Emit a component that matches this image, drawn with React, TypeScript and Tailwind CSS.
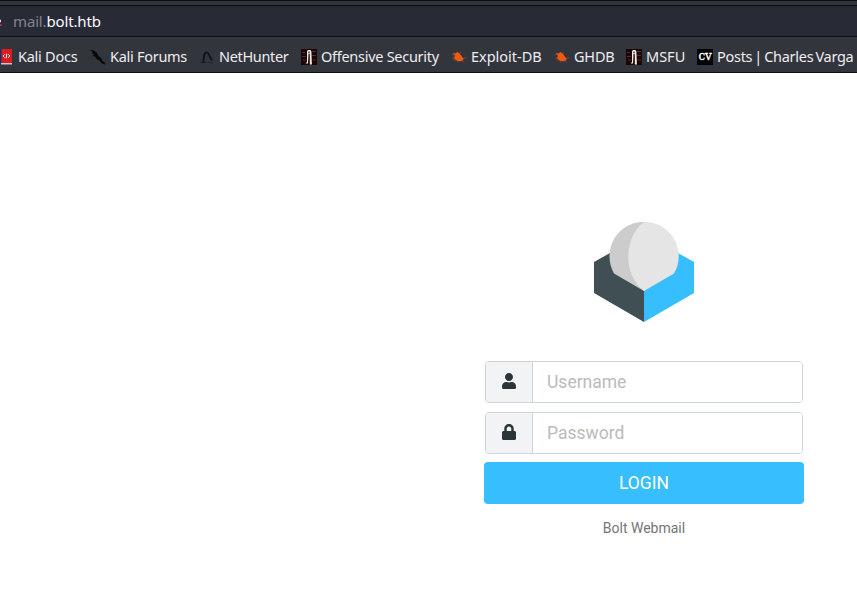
import React from "react";

function DocsIcon() {
  return (
    <svg width="16" height="16" viewBox="0 0 16 16" className="block">
      <path d="M0 0h4v16H0z" fill="#193160" />
      <path d="M3.500 0H14v14H3.500z" fill="#dc1b20" />
      <path d="M3 14h11v1.500H3z" fill="#c8c8cc" />
      <path d="M6.800 5.300L5 7l1.600 1.700M8.700 4.800L8.200 9.300M10.200 5.300l1.600 1.700L10 8.700" fill="none" stroke="#fff" strokeWidth="1" />
    </svg>
  );
}

function ForumsIcon() {
  return (
    <svg width="16" height="16" viewBox="0 0 16 16" className="block">
      <path d="M0 .5l4.500 1.400 2.400 1.900L8.500 7l2.500 1.800 1.300 3L15.500 14l-.9 1.600-3-1.300-2.200-2.700-1.900-1-1.700-2.700-1.900-1 .1-1.700-2-.9L2.400 3z" fill="#08080a" />
      <path d="M2.500 6l2.200 1.300M5.500 9.200L7.600 10" stroke="#111216" />
    </svg>
  );
}

function HunterIcon() {
  return (
    <svg width="16" height="16" viewBox="0 0 16 16" className="block">
      <path d="M4 12.700C5.500 10 4 4 7.300 3.300c3-.3 2.700 4.700 5.800 8.200" fill="none" stroke="#111317" strokeWidth="1.800" />
      <path d="M5.500 4L3.500 5.600l3-.3zM.5 14l5.200-1.900 1.500.8-1.200.9z" fill="#14161a" />
      <path d="M8 13.400l6 .4" stroke="#202329" />
    </svg>
  );
}

function SecurityIcon() {
  return (
    <svg width="16" height="16" viewBox="0 0 16 16" className="block">
      <path fill="#1d0505" d="M0 0h16v16H0z" />
      <path d="M1 3.500h3M11 2.500h4M1 7.500h4M11 6.500h4M2 11h3M12 11h3" stroke="#493130" />
      <path d="M6 2.400L6.800 1h2.600l1 1.400.5 13.100H8.800L8.500 5H7.800L7 14.500H4.600L6 13z" fill="#eeeae5" />
      <path d="M7 3.200h2M8.100 4.500v9.800" stroke="#291414" strokeWidth=".9" />
    </svg>
  );
}

function ExploitIcon() {
  return (
    <svg width="16" height="16" viewBox="0 0 16 16" className="block">
      <path d="M1.800 3.800l3 .6 1.300-1.300 2 .9 1.900 2.200 1.500 2.300 1.500 1.700-1.300.5-.4 1.400-2.600.2-2.800-.6-2-1.300-.8-2L4 6.800z" fill="#f05a13" />
      <path d="M4 9l-3 .4M5 10.500l-2.300 1M7 12l-1.200 1M8.800 5l.8-1.800M12 9.400l3.300-.7M11 11.500l1.600 1.800M4 6.200L.8 5.500" stroke="#a04a22" strokeWidth=".8" />
    </svg>
  );
}

function CvIcon() {
  return (
    <div className="flex h-4 w-4 items-center justify-center bg-black font-['DejaVu_Serif',serif] text-[12px] leading-none tracking-[-0.2px] text-white">
      <span className="-mt-px [-webkit-text-stroke:0.3px_white]">cv</span>
    </div>
  );
}

const bookmarks = [
  { label: "Kali Docs", icon: <DocsIcon />, width: "w-[92px]", tracking: "tracking-[-0.25px]" },
  { label: "Kali Forums", icon: <ForumsIcon />, width: "w-[109px]", tracking: "tracking-[-0.28px]" },
  { label: "NetHunter", icon: <HunterIcon />, width: "w-[102px]", tracking: "tracking-[-0.33px]" },
  { label: "Offensive Security", icon: <SecurityIcon />, width: "w-[150px]", tracking: "tracking-[-0.28px]" },
  { label: "Exploit-DB", icon: <ExploitIcon />, width: "w-[103px]", tracking: "tracking-[-0.02px]" },
  { label: "GHDB", icon: <ExploitIcon />, width: "w-[72px]", tracking: "tracking-[-0.2px]" },
  { label: "MSFU", icon: <SecurityIcon />, width: "w-[71px]", tracking: "tracking-normal" },
  { label: "Posts | Charles Varga", icon: <CvIcon />, width: "w-[160px]", tracking: "tracking-[-0.28px] [word-spacing:-1.4px]" },
];

function BrowserBar() {
  return (
    <header className="h-[73px] overflow-hidden bg-[#33353d] font-['Noto_Sans',sans-serif]">
      <div className="h-1.5 border-y border-[#0d0e12]" />
      <div className="flex h-[31px] items-center border-b border-[#0d0e12] bg-[#282a36]">
        <div className="h-2.5 w-[13px] overflow-hidden">
          <svg width="13" height="10" viewBox="0 0 13 10">
            <path d="M0 3.500Q1.500 5 0 6.500" fill="none" stroke="#ddd" />
            <path d="M0 9.500l1.700-.8" stroke="#ed2454" strokeWidth="1.500" />
          </svg>
        </div>
        <div className="text-[15px] leading-5 tracking-[-0.15px] text-[#fbfbfe]">
          <span className="text-[#82848d]">mail.</span>bolt.htb
        </div>
      </div>
      <nav className="-ml-0.5 flex h-9 w-[859px] items-center border-b border-[#0d0e12] pt-1">
        {bookmarks.map(({ label, icon, width, tracking }) => (
          <div key={label} className={`flex shrink-0 items-center gap-1 ${width}`}>
            <span className="w-4 shrink-0">{icon}</span>
            <span className={`-mt-0.5 text-[14.5px] leading-5 whitespace-nowrap text-[#ededf0] ${tracking}`}>{label}</span>
          </div>
        ))}
      </nav>
    </header>
  );
}

function Logo() {
  return (
    <svg width="100" height="101" viewBox="0 0 100 101" className="mx-auto block">
      <path d="M0 41l16-9 34 38v31L0 72z" fill="#404f54" />
      <path d="M100 41l-16-9-34 38v31l50-29z" fill="#37beff" />
      <path d="M50 .8C31 .8 15.500 16 15.500 35c0 6.500 1.500 12 4.500 17.500L50 70V.8z" fill="#ccc" />
      <path d="M50 .8c19 0 34.700 15.200 34.700 34.200 0 6.500-1.500 12-4.700 17.500L50 70C29 54 29 17 50 .8z" fill="#e5e5e5" />
    </svg>
  );
}

function UserIcon() {
  return (
    <svg width="14" height="16" viewBox="0 0 448 512">
      <path d="M224 256c70.700 0 128-57.300 128-128S294.700 0 224 0 96 57.300 96 128s57.300 128 128 128zm89.600 32h-16.700c-22.200 10.200-46.900 16-72.900 16s-50.600-5.800-72.900-16h-16.700C60.200 288 0 348.200 0 422.400V464c0 26.500 21.500 48 48 48h352c26.500 0 48-21.500 48-48v-41.600c0-74.200-60.200-134.400-134.400-134.400z" fill="#2c363a" />
    </svg>
  );
}

function LockIcon() {
  return (
    <svg width="14" height="16" viewBox="0 0 448 512">
      <path d="M400 224h-24v-72C376 68.200 307.800 0 224 0S72 68.200 72 152v72H48c-26.500 0-48 21.500-48 48v192c0 26.500 21.500 48 48 48h352c26.500 0 48-21.500 48-48V272c0-26.500-21.500-48-48-48zm-104 0H152v-72c0-39.700 32.300-72 72-72s72 32.300 72 72v72z" fill="#2c363a" />
    </svg>
  );
}

function Field({ icon, placeholder, type }: { icon: React.ReactNode; placeholder: string; type: string }) {
  return (
    <label className="mx-px flex h-[42px] overflow-hidden rounded-[4px] border border-[#ced4da]">
      <span className="flex w-[47px] shrink-0 items-center justify-center border-r border-[#ced4da] bg-[#f1f3f5] pb-[2px]">{icon}</span>
      <input
        type={type}
        placeholder={placeholder}
        className="min-w-0 flex-1 bg-white px-3.5 text-[17.5px] outline-none placeholder:text-[#bbb]"
      />
    </label>
  );
}

export default function App() {
  return (
    <div className="h-[589px] w-[857px] overflow-hidden bg-white">
      <BrowserBar />
      <main className="ml-[484px] w-[320px] pt-[148px] font-[Roboto,sans-serif]">
        <Logo />
        <form className="mt-[39px]" onSubmit={(event) => event.preventDefault()}>
          <div className="flex flex-col gap-[9px]">
            <Field icon={<UserIcon />} placeholder="Username" type="text" />
            <Field icon={<LockIcon />} placeholder="Password" type="password" />
          </div>
          <button className="mt-2 block h-[42px] w-full rounded-[4px] bg-[#37beff] text-[17.5px] text-white">LOGIN</button>
        </form>
        <p className="mt-3.5 text-center text-sm text-[#737677]">Bolt Webmail</p>
      </main>
    </div>
  );
}
